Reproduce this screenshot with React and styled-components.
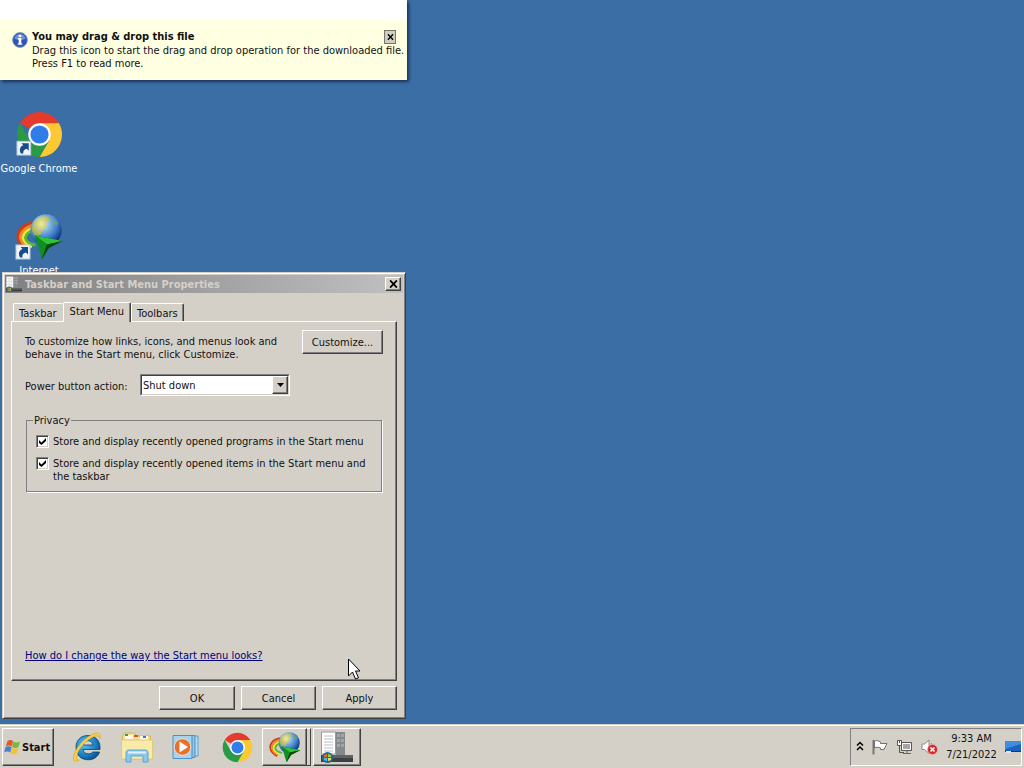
import React, { useState } from "react";
import styled, { createGlobalStyle, css } from "styled-components";

const face = "#d4d0c8";
const shadow = "#808080";
const dark = "#404040";
const ui = `"DejaVu Sans Condensed", "DejaVu Sans", sans-serif`;

const GlobalStyle = createGlobalStyle`
  *, *::before, *::after { box-sizing: border-box; }
  body { margin: 0; background: #3a6ea5; overflow: hidden; }
  body, button, input, select { font-family: ${ui}; font-size: 11px; line-height: 13px; color: #111; }
  svg { flex-shrink: 0; }
`;

const raised = css`
  border: 1px solid;
  border-color: #fff ${dark} ${dark} #fff;
  box-shadow: inset -1px -1px 0 ${shadow};
`;

const Screen = styled.div`
  display: flex;
  flex-direction: column;
  height: 100vh;
  background: #3a6ea5;
`;

const Desktop = styled.main`
  position: relative;
  flex: 1;
`;

/* ---------- desktop shortcuts ---------- */

const Shortcut = styled.a`
  position: absolute;
  left: 0;
  top: ${(p) => p.$top}px;
  display: flex;
  flex-direction: column;
  align-items: center;
  gap: 4px;
  width: 78px;
  color: #fff;
  text-decoration: none;
  white-space: nowrap;
`;

/* ---------- notification balloon ---------- */

const Balloon = styled.aside`
  position: absolute;
  top: 0;
  left: 0;
  display: flex;
  align-items: flex-start;
  gap: 4px;
  width: 407px;
  padding: 30px 11px 10px 12px;
  background: linear-gradient(#fff 20px, #ffffe1 20px);
  box-shadow: 2px 2px 3px rgba(0, 0, 30, 0.55);
`;

const BalloonText = styled.div`
  flex: 1;
  min-width: 0;
  white-space: nowrap;
  p { margin: 0; }
`;

const BalloonHead = styled.div`
  display: flex;
  justify-content: space-between;
  height: 14px;
`;

const BalloonTitle = styled.strong`
  font-size: 11px;
`;

const BalloonClose = styled.button`
  display: grid;
  place-items: center;
  width: 12px;
  height: 14px;
  padding: 0;
  border: 1px solid #76766a;
  background: #cfcfc0;
`;

/* ---------- dialog ---------- */

const Dialog = styled.section`
  position: absolute;
  left: 2px;
  top: 272px;
  display: flex;
  flex-direction: column;
  width: 404px;
  padding: 2px;
  background: ${face};
  border: 1px solid;
  border-color: ${face} ${dark} ${dark} ${face};
  box-shadow: inset 1px 1px 0 #fff, inset -1px -1px 0 ${shadow};
`;

const TitleBar = styled.header`
  display: flex;
  align-items: center;
  gap: 3px;
  height: 18px;
  padding: 0 2px 0 1px;
  background: linear-gradient(90deg, #808080, #c0c0c0);
`;

const Title = styled.h1`
  flex: 1;
  margin: 0;
  font-size: 11px;
  line-height: 13px;
  color: ${face};
`;

const CloseButton = styled.button`
  ${raised}
  display: grid;
  place-items: center;
  width: 16px;
  height: 14px;
  padding: 0;
  background: ${face};
`;

const DialogBody = styled.div`
  padding: 9px 6px 6px;
`;

const Tabs = styled.div`
  display: flex;
  align-items: flex-end;
  padding-left: 2px;
`;

const Tab = styled.button`
  position: relative;
  height: 18px;
  padding: 1px 5px 0;
  border: 1px solid;
  border-color: #fff ${dark} transparent #fff;
  border-bottom: 0;
  border-radius: 2px 2px 0 0;
  background: ${face};
  box-shadow: ${(p) => (p.$plain ? "none" : `inset -1px 0 0 ${shadow}`)};
  border-right-color: ${(p) => (p.$plain ? face : dark)};
  white-space: nowrap;
  ${(p) =>
    p.$active &&
    css`
      height: 20px;
      margin: 0 0 -1px;
      padding: 0 6px 3px;
      z-index: 1;
    `}
`;

const Panel = styled.div`
  display: flex;
  flex-direction: column;
  min-height: 360px;
  padding: 8px 13px 18px;
  ${raised}
`;

const Intro = styled.div`
  display: flex;
  justify-content: space-between;
  align-items: flex-start;
  p { margin: 5px 0 0; white-space: nowrap; }
`;

const PushButton = styled.button`
  ${raised}
  width: ${(p) => p.$width}px;
  height: 24px;
  padding: 0;
  background: ${face};
`;

const Field = styled.div`
  display: flex;
  align-items: center;
  margin-top: 13px;
  label { width: 115px; padding-top: 3px; white-space: nowrap; }
`;

const SelectBox = styled.div`
  display: grid;
  width: 150px;
  height: 22px;
  border: 1px solid;
  border-color: ${shadow} #fff #fff ${shadow};
  > * { grid-area: 1 / 1; }
`;

const Select = styled.select`
  appearance: none;
  padding: 0 20px 0 1px;
  border: 1px solid;
  border-color: ${dark} ${face} ${face} ${dark};
  border-radius: 0;
  background: #fff;
  outline: 0;
`;

const SelectArrow = styled.span`
  ${raised}
  display: grid;
  place-items: center;
  justify-self: end;
  width: 16px;
  height: 18px;
  margin: 1px;
  background: ${face};
  pointer-events: none;
`;

const Privacy = styled.fieldset`
  display: flex;
  flex-direction: column;
  gap: 9px;
  margin: 18px 1px 0;
  padding: 8px 9px 8px;
  border: 1px solid ${shadow};
  box-shadow: 1px 1px 0 #fff;
  legend { margin-left: -3px; padding: 0 1px; }
`;

const CheckLabel = styled.label`
  display: flex;
  align-items: flex-start;
  gap: 4px;
  white-space: nowrap;
`;

const CheckBox = styled.span`
  display: grid;
  width: 13px;
  height: 13px;
  place-items: center;
  > * { grid-area: 1 / 1; pointer-events: none; }
  input { pointer-events: auto; }
  input:not(:checked) + svg { visibility: hidden; }
`;

const CheckInput = styled.input`
  appearance: none;
  width: 13px;
  height: 13px;
  margin: 0;
  background: #fff;
  border: 1px solid;
  border-color: ${shadow} #fff #fff ${shadow};
  box-shadow: inset 1px 1px 0 ${dark}, inset -1px -1px 0 ${face};
`;

const HelpLink = styled.a`
  align-self: flex-start;
  margin-top: auto;
  color: #00007c;
  white-space: nowrap;
`;

const Actions = styled.footer`
  display: flex;
  justify-content: flex-end;
  gap: 6px;
  margin-top: 5px;
`;

const Pointer = styled.svg`
  position: absolute;
  left: 347px;
  top: 658px;
  pointer-events: none;
`;

/* ---------- taskbar ---------- */

const Taskbar = styled.footer`
  position: relative;
  display: flex;
  align-items: stretch;
  height: 44px;
  padding: 3px 2px 2px;
  background: ${face};
  border-top: 1px solid ${face};
  box-shadow: inset 0 1px 0 #fff;
`;

const StartButton = styled.button`
  ${raised}
  display: flex;
  align-items: center;
  gap: 1px;
  width: 52px;
  padding: 0 1px;
  background: ${face};
  font-weight: 700;
`;

const Launchers = styled.nav`
  display: flex;
  flex: 1;
  margin-left: 8px;
`;

const Launcher = styled.button`
  display: grid;
  place-items: center;
  width: ${(p) => p.$width || 50}px;
  padding: 0;
  border: 0;
  background: ${face};
  ${(p) => p.$open && raised}
`;

const OpenApps = styled.div`
  display: flex;
  gap: 2px;
`;

const Stack = styled.div`
  display: flex;
  padding-right: 3px;
  border: 1px solid;
  border-color: #fff ${dark} ${dark} #fff;
  > button { margin: -1px 0 -1px -1px; }
`;

const Tray = styled.div`
  display: flex;
  align-items: center;
  gap: 8px;
  padding: 0 0 0 5px;
  border: 1px solid;
  border-color: ${shadow} #fff #fff ${shadow};
`;

const TrayButton = styled.button`
  display: grid;
  place-items: center;
  padding: 0;
  border: 0;
  background: none;
`;

const Clock = styled.time`
  width: 51px;
  line-height: 16px;
  text-align: center;
  white-space: nowrap;
`;

/* ---------- drawings ---------- */

const ShortcutArrow = () => (
  <g>
    <rect x="1" y="31" width="14" height="14" fill="#eef4fa" stroke="#b9cbe0" />
    <path d="M5 43.500c-2-4-1-7 2.500-8.500L5.500 33H13v7.500l-2-2c-3 .5-4 2.500-3.500 5z" fill="#164a8c" />
  </g>
);

const ChromeMark = ({ size, shortcut }) => (
  <svg width={size} height={size} viewBox="0 0 48 48" overflow="visible" aria-hidden="true">
    <g>
      <path d="M24 24 4.100 12.500A23 23 0 0 1 43.900 12.500H24z" fill="#e33b2e" />
      <path d="M24 12.500h19.900A23 23 0 0 1 24 47l10-17.200z" fill="#fcc934" />
      <path d="M4.100 12.500 14 29.800 24 35.500 34 29.800 24 47A23 23 0 0 1 4.100 12.500z" fill="#2b9a46" />
      <circle cx="24" cy="24" r="11.500" fill="#fff" />
      <circle cx="24" cy="24" r="9.300" fill="#2f7de9" />
    </g>
    {shortcut && <ShortcutArrow />}
  </svg>
);

const IdmMark = ({ width, height, shortcut, id }) => (
  <svg width={width} height={height} viewBox="0 0 48 46" aria-hidden="true">
    <defs>
      <radialGradient id={id} cx="0.38" cy="0.3" r="0.72">
        <stop offset="0" stopColor="#e4f1f6" />
        <stop offset="0.35" stopColor="#7fb4e2" />
        <stop offset="0.7" stopColor="#3474c4" />
        <stop offset="1" stopColor="#0b2f70" />
      </radialGradient>
      <radialGradient id={`${id}l`} cx="0.5" cy="0.4" r="0.7">
        <stop offset="0" stopColor="#f0ea8c" />
        <stop offset="1" stopColor="#a5a83c" />
      </radialGradient>
    </defs>
    <g fill="none" strokeWidth="2.800">
      <path d="M18 9C8 10 2 17 3 24c1 6 5 9 10 12" stroke="#cf3a1c" />
      <path d="M18 11.500C10 13 5 19 5.500 24c1 5 4 8 9 10.500" stroke="#f08a20" />
      <path d="M18 14C12 15.500 8 20 8 24c1 4 4 7 9 9" stroke="#f3e43c" />
      <path d="M18 16.500C14 18 10.500 21 10.500 24c.5 3 4 6 10 7" stroke="#52bb30" />
    </g>
    <circle cx="31" cy="16" r="15.700" fill={`url(#${id})`} />
    <path d="M17 17c-1-7 4-13 11-15l6 1 1 4-4 2 1 4-4 3-3 5-5 1z" fill={`url(#${id}l)`} opacity=".85" />
    <path d="M38 4c3 1 5 4 6 6l-3 2-4-3z" fill="#7fa873" opacity=".5" />
    <path d="M20 21.500 47.500 27 34 32.500 27 45 25 34z" fill="#0a5d14" />
    <path d="M20 21.500 47.500 27 32 30.500z" fill="#2cc534" />
    <path d="M20 21.500 32 30.500 27 45z" fill="#0f8f20" />
    <path d="M32 30.500 47.500 27 34 34 27 45z" fill="#07480e" />
    {shortcut && <ShortcutArrow />}
  </svg>
);

const InfoMark = () => (
  <svg width="16" height="18" viewBox="0 0 16 18" aria-hidden="true">
    <circle cx="8" cy="10" r="7.400" fill="#2b56b8" stroke="#8d9bb5" />
    <path d="M2.500 8.500a5.700 5.700 0 0 1 11 0c-3 2-8 2-11 0z" fill="#6e93dd" />
    <path d="M6.700 4.800h2.600V7H6.700zM6 8h3.300v5.500h1v1.200H5.700v-1.200h1V9.200H6z" fill="#fff" />
  </svg>
);

const CrossMark = ({ size }) => (
  <svg width={size} height={size - 1} viewBox="0 0 8 7" aria-hidden="true">
    <path d="M1 .3l6 6.400M7 .3L1 6.700" stroke="#000" strokeWidth="1.600" />
  </svg>
);

const PropertiesMark = ({ size }) => (
  <svg width={size} height={size} viewBox="0 0 32 32" aria-hidden="true">
    <path d="M15 1h9v23h-9z" fill="#85898b" />
    <path d="M16 3h3v3h-3zM20 3h3v3h-3zM16 8h3v3h-3zM20 8h3v3h-3zM16 13h3v3h-3zM20 13h3v3h-3z" fill="#a2a5a6" />
    <path d="M.5 1h14v22H.5z" fill="#fff" stroke="#9a9a9a" />
    <path d="M3 5h9M3 8h9M3 11h9M3 14h9M3 17h9M3 20h9" stroke="#b9bcc0" />
    <path d="M0 24h32v7H0z" fill="#3b4044" />
    <path d="M12 24h20v3H12z" fill="#5d6366" />
    <circle cx="6.500" cy="26.500" r="5.500" fill="#1f6f8f" />
    <path d="M3 24l3-1v3H3z" fill="#f0652c" />
    <path d="M7 23l3 1v2H7z" fill="#8ed04b" />
    <path d="M3 27h3v3l-3-1z" fill="#55b5f0" />
    <path d="M7 27h3v2l-3 1z" fill="#ffd84a" />
  </svg>
);

const WindowsFlag = () => (
  <svg width="17" height="16" viewBox="0 0 17 16" aria-hidden="true">
    <path d="M3.500 2c2-1.300 4-1.300 5.500 0L7.800 7.500c-2-1.400-4-1.300-6.100 0z" fill="#e4572a" />
    <path d="M9.500 2.500c2 1.200 4 1.200 6.500 0L14.500 8c-2 1.200-4 1.200-6.400 0z" fill="#79b83c" />
    <path d="M1.500 8.200c2-1.300 4-1.300 6.100 0L6.200 13.500c-2-1.400-4-1.400-6 0z" fill="#4a7fd0" />
    <path d="M8 8.700c2 1.300 4 1.300 6.300 0l-1.500 5.500c-2 1.300-4 1.300-6.300 0z" fill="#f4c12f" />
  </svg>
);

const ExplorerE = () => (
  <svg width="32" height="32" viewBox="0 0 32 32" aria-hidden="true">
    <defs>
      <radialGradient id="ie" cx="0.35" cy="0.35" r="0.8">
        <stop offset="0" stopColor="#59c4f2" />
        <stop offset="0.6" stopColor="#1a7cc2" />
        <stop offset="1" stopColor="#093d7c" />
      </radialGradient>
    </defs>
    <path
      d="M17 4.500c7 0 12 5 12 11.500v2.500H12c.5 3 2.500 4.300 5.500 4.300 2 0 3.500-.8 4.300-1.800H28.500c-1.500 5-6 7.800-11.300 7.800C10 28.800 5 24 5 16.500S10 4.500 17 4.500zM12.200 14h9.600c-.5-2.800-2-4.300-4.800-4.300s-4.300 1.500-4.800 4.300z"
      fill="url(#ie)"
      stroke="#0a4070"
      strokeWidth=".8"
      fillRule="evenodd"
    />
    <path d="M8 29.500c-5 2-7-.5-5-6C5.500 16 13 7.500 21 3.500c6-3 9-1.500 8 4-1-3-3.500-3.500-8-1C13.500 11 7.500 18 6 24c-1 3.500-.2 5 2 5.500z" fill="#f5cf4a" stroke="#d0a020" strokeWidth=".6" />
  </svg>
);

const FolderMark = () => (
  <svg width="34" height="32" viewBox="0 0 34 32" aria-hidden="true">
    <path d="M2.500 5l2-3h10l2 3h14v23h-28z" fill="#f2de8e" stroke="#d3b75c" />
    <path d="M5 4h8v4H5zM20 5h8v4h-8z" fill="#fffbe8" />
    <path d="M5 3h3v2H5z" fill="#3ba045" />
    <path d="M14 4h4v2h-4z" fill="#d4552f" />
    <path d="M23 5h3v2h-3z" fill="#3a78c4" />
    <path d="M1.500 9h31v19h-31z" fill="#f8eba9" stroke="#e0ca7a" />
    <path d="M6 31V22c0-2 1-3 3-3h16c2 0 3 1 3 3v9h-5v-6H11v6z" fill="#8cc8ee" stroke="#5aa5d4" />
    <path d="M8 21.500h18" stroke="#dff3ff" strokeWidth="2" />
  </svg>
);

const MediaMark = () => (
  <svg width="30" height="28" viewBox="0 0 30 28" aria-hidden="true">
    <path d="M10 3h16v20H10z" fill="#b7ddf2" stroke="#5b9fca" />
    <path d="M6 2.500h17v22H6z" fill="#8ec5e8" stroke="#4c91c2" />
    <path d="M1 2.500h19v23H1z" fill="#a6d3ee" stroke="#4c91c2" />
    <circle cx="10.500" cy="14" r="8.300" fill="#e8702a" stroke="#f7ddc9" />
    <path d="M7.500 8.500 16 14l-8.500 5.500z" fill="#fff" />
  </svg>
);

const ChevronUp = () => (
  <svg width="8" height="12" viewBox="0 0 8 12" aria-hidden="true">
    <path d="M1 4.500 4 1.500l3 3M1 9l3-3 3 3" fill="none" stroke="#000" strokeWidth="1.500" />
  </svg>
);

const FlagMark = () => (
  <svg width="16" height="16" viewBox="0 0 16 16" aria-hidden="true">
    <path d="M1.500 1v14.500" stroke="#777" strokeWidth="2" />
    <path d="M2.500 2c3-1 4 0 6 1v1.500h6.500l-3 6H8.500V9c-2-1-4-1-6 0z" fill="#fff" stroke="#707070" />
  </svg>
);

const NetworkMark = () => (
  <svg width="17" height="16" viewBox="0 0 17 16" aria-hidden="true">
    <path d="M5.500 3.500h10v8h-10z" fill="#a4a4a4" stroke="#555" />
    <path d="M6.500 4.500h8v6h-8z" fill="none" stroke="#fff" />
    <path d="M7 14.500h8M11 12v2" stroke="#666" />
    <path d="M3.500 6v7.500H8" fill="none" stroke="#555" />
    <path d="M1.500 1.500h4v5h-4z" fill="#fff" stroke="#555" />
    <path d="M3.500 1v3" stroke="#555" />
  </svg>
);

const MutedMark = () => (
  <svg width="17" height="16" viewBox="0 0 17 16" aria-hidden="true">
    <path d="M1 5h2.500L8 1v13.500L3.500 10.500H1z" fill="#fff" stroke="#888" />
    <path d="M10 4c1 1 1 2 1 3" fill="none" stroke="#888" />
    <circle cx="11.500" cy="10.500" r="5" fill="#d8282c" stroke="#f5b5b0" strokeWidth=".6" />
    <path d="M9.500 8.500l4 4m0-4l-4 4" stroke="#fff" strokeWidth="1.600" />
  </svg>
);

const ScreenMark = () => (
  <svg width="16" height="14" viewBox="0 0 16 14" aria-hidden="true">
    <path d="M0 1h16v10H0z" fill="#1c62c0" />
    <path d="M0 1h16v3L0 9z" fill="#3e8ee0" />
    <path d="M0 11h16v1H0z" fill="#16345e" />
    <path d="M1 11h5v2H1z" fill="#dfe8f3" />
  </svg>
);

const Tick = () => (
  <svg width="7" height="7" viewBox="0 0 7 7" aria-hidden="true">
    <path d="M0 2l2.500 2.500L7 0v3L2.500 7 0 5z" />
  </svg>
);

export default function App() {
  const [programs, setPrograms] = useState(true);
  const [items, setItems] = useState(true);

  return (
    <Screen>
      <GlobalStyle />
      <Desktop>
        <Shortcut href="#chrome" $top={111}>
          <ChromeMark size={47} shortcut />
          <span>Google Chrome</span>
        </Shortcut>
        <Shortcut href="#internet" $top={214}>
          <IdmMark width={48} height={46} id="idmDesktop" shortcut />
          <span>Internet</span>
        </Shortcut>

        <Balloon>
          <InfoMark />
          <BalloonText>
            <BalloonHead>
              <BalloonTitle>You may drag &amp; drop this file</BalloonTitle>
              <BalloonClose aria-label="Close message">
                <CrossMark size={7} />
              </BalloonClose>
            </BalloonHead>
            <p>Drag this icon to start the drag and drop operation for the downloaded file.</p>
            <p>Press F1 to read more.</p>
          </BalloonText>
        </Balloon>

        <Dialog aria-labelledby="dialog-title">
          <TitleBar>
            <PropertiesMark size={16} />
            <Title id="dialog-title">Taskbar and Start Menu Properties</Title>
            <CloseButton aria-label="Close">
              <CrossMark size={9} />
            </CloseButton>
          </TitleBar>
          <DialogBody>
            <Tabs role="tablist">
              <Tab role="tab" $plain>Taskbar</Tab>
              <Tab role="tab" aria-selected="true" $active>Start Menu</Tab>
              <Tab role="tab">Toolbars</Tab>
            </Tabs>
            <Panel role="tabpanel">
              <Intro>
                <p>
                  To customize how links, icons, and menus look and
                  <br />
                  behave in the Start menu, click Customize.
                </p>
                <PushButton $width={81}>Customize...</PushButton>
              </Intro>
              <Field>
                <label htmlFor="power">Power button action:</label>
                <SelectBox>
                  <Select id="power" defaultValue="Shut down">
                    <option>Shut down</option>
                  </Select>
                  <SelectArrow>
                    <svg width="7" height="4" viewBox="0 0 7 4" aria-hidden="true">
                      <path d="M0 0h7L3.500 4z" />
                    </svg>
                  </SelectArrow>
                </SelectBox>
              </Field>
              <Privacy>
                <legend>Privacy</legend>
                <CheckLabel>
                  <CheckBox>
                    <CheckInput type="checkbox" checked={programs} onChange={(e) => setPrograms(e.target.checked)} />
                    <Tick />
                  </CheckBox>
                  <span>Store and display recently opened programs in the Start menu</span>
                </CheckLabel>
                <CheckLabel>
                  <CheckBox>
                    <CheckInput type="checkbox" checked={items} onChange={(e) => setItems(e.target.checked)} />
                    <Tick />
                  </CheckBox>
                  <span>
                    Store and display recently opened items in the Start menu and
                    <br />
                    the taskbar
                  </span>
                </CheckLabel>
              </Privacy>
              <HelpLink href="#help">How do I change the way the Start menu looks?</HelpLink>
            </Panel>
            <Actions>
              <PushButton $width={76}>OK</PushButton>
              <PushButton $width={75}>Cancel</PushButton>
              <PushButton $width={75}>Apply</PushButton>
            </Actions>
          </DialogBody>
        </Dialog>

        <Pointer width="13" height="22" viewBox="0 0 13 22" aria-hidden="true">
          <path d="M1.500 1v17l4-4 3 7 3-1.200L8.500 13H13z" fill="#fff" stroke="#000" />
        </Pointer>
      </Desktop>

      <Taskbar>
        <StartButton>
          <WindowsFlag />
          Start
        </StartButton>
        <Launchers>
          <Launcher aria-label="Internet Explorer"><ExplorerE /></Launcher>
          <Launcher aria-label="File Explorer"><FolderMark /></Launcher>
          <Launcher aria-label="Media Player"><MediaMark /></Launcher>
          <Launcher aria-label="Google Chrome"><ChromeMark size={31} /></Launcher>
          <OpenApps>
            <Stack>
              <Launcher $open $width={45} aria-label="Internet Download Manager">
                <IdmMark width={33} height={31} id="idmTask" />
              </Launcher>
            </Stack>
            <Launcher $open $width={48} aria-label="Taskbar and Start Menu Properties">
              <PropertiesMark size={32} />
            </Launcher>
          </OpenApps>
        </Launchers>
        <Tray>
          <TrayButton aria-label="Show hidden icons"><ChevronUp /></TrayButton>
          <TrayButton aria-label="Action Center"><FlagMark /></TrayButton>
          <TrayButton aria-label="Network"><NetworkMark /></TrayButton>
          <TrayButton aria-label="Volume muted"><MutedMark /></TrayButton>
          <Clock>
            9:33 AM
            <br />
            7/21/2022
          </Clock>
          <TrayButton aria-label="Show desktop"><ScreenMark /></TrayButton>
        </Tray>
      </Taskbar>
    </Screen>
  );
}
